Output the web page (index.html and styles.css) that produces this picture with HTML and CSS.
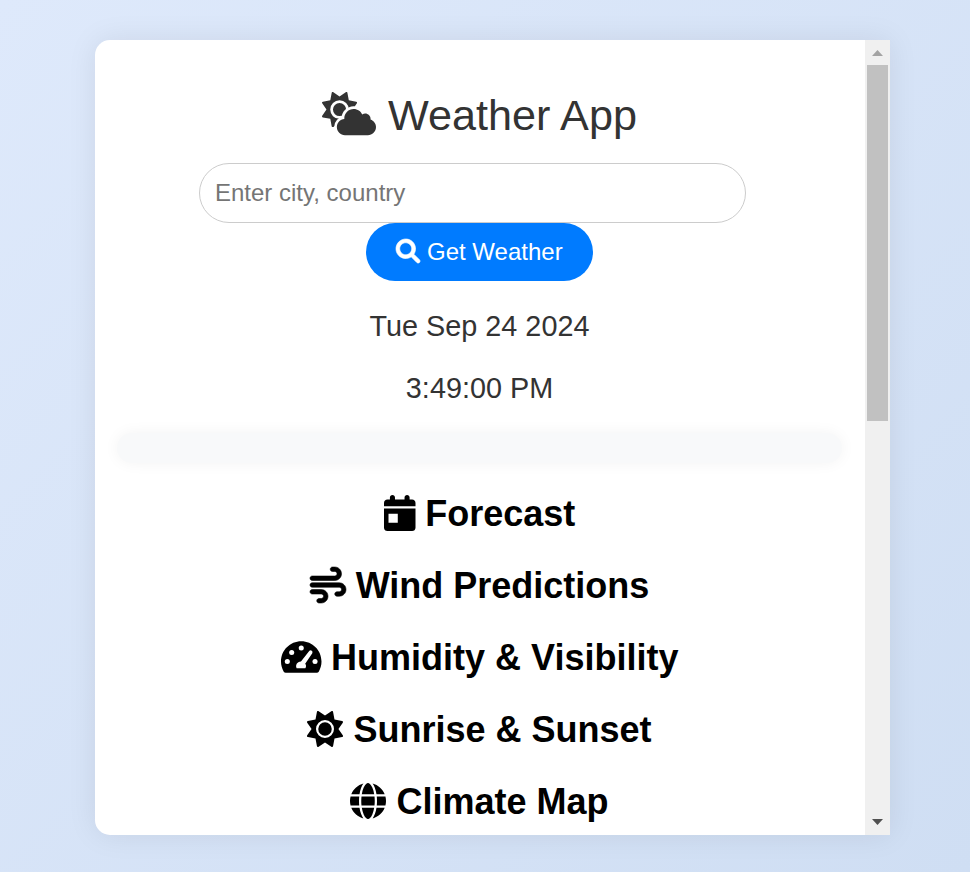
FILE: index.html
```html
<!DOCTYPE html>
<html lang="en">
<head>
<meta charset="utf-8">
<title>Weather App</title>
<link rel="stylesheet" href="styles.css">
</head>
<body>
<div class="card">
  <main class="content">
    <h1 class="title"><svg class="icon wide" viewBox="0 0 640 512"><path transform="scale(.8125)" d="M361.5 1.2c5 2.1 8.6 6.6 9.6 11.9L391 121l107.9 19.8c5.3 1 9.8 4.6 11.9 9.6s1.5 10.7-1.6 15.2L446.9 256l62.3 90.3c3.1 4.5 3.7 10.2 1.6 15.2s-6.6 8.6-11.9 9.6L391 391 371.1 498.9c-1 5.3-4.6 9.8-9.6 11.9s-10.7 1.5-15.2-1.6L256 446.9l-90.3 62.3c-4.5 3.1-10.2 3.7-15.2 1.6s-8.6-6.6-9.6-11.9L121 391 13.1 371.1c-5.3-1-9.8-4.6-11.9-9.6s-1.5-10.7 1.6-15.2L65.1 256 2.8 165.7c-3.1-4.5-3.7-10.2-1.6-15.2s6.6-8.6 11.9-9.6L121 121 140.9 13.1c1-5.3 4.6-9.8 9.6-11.9s10.7-1.5 15.2 1.6L256 65.1 346.3 2.8c4.5-3.1 10.2-3.7 15.2-1.6zM160 256a96 96 0 1 1 192 0 96 96 0 1 1 -192 0zm232 0a136 136 0 1 0 -272 0 136 136 0 1 0 272 0z"/><path class="cloud" d="M575.2 325.7c.2-1.9.8-3.7.8-5.6 0-35.3-28.7-64-64-64-12.6 0-24.2 3.8-34.1 10-17.6-38.8-56.5-66-101.9-66-61.8 0-112 50.1-112 112 0 3 .7 5.8.9 8.7-49.6 3.7-88.9 44.7-88.9 95.3 0 53 43 96 96 96h272c53 0 96-43 96-96 0-42.1-27.2-77.4-64.8-90.4z"/></svg> Weather App</h1>
    <input class="city" type="text" placeholder="Enter city, country">
    <button class="search"><svg class="icon lens" viewBox="0 0 512 512"><path d="M500.3 443.7l-119.7-119.7c27.22-40.41 40.65-90.9 33.46-144.7C401.8 87.79 326.8 13.32 235.2 1.723C99.01-15.51-15.51 99.01 1.724 235.2c11.6 91.64 86.08 166.7 177.6 178.9c53.8 7.189 104.3-6.236 144.7-33.46l119.7 119.7c15.62 15.62 40.95 15.62 56.57 0C515.9 484.7 515.9 459.3 500.3 443.7zM79.1 208c0-70.58 57.42-128 128-128s128 57.42 128 128c0 70.58-57.42 128-128 128S79.1 278.6 79.1 208z"/></svg> Get Weather</button>
    <p class="stamp">Tue Sep 24 2024</p>
    <p class="stamp">3:49:00 PM</p>
    <div class="info"></div>
    <h2 class="section"><svg class="icon narrow" viewBox="0 0 448 512"><path d="M0 464C0 490.5 21.5 512 48 512h352c26.5 0 48-21.5 48-48V192H0V464zM64 266h132v128H64zM400 64h-36V36c0-20-16-36-36-36s-36 16-36 36v28H156V36c0-20-16-36-36-36S84 16 84 36v28H48C21.5 64 0 85.5 0 112V160h448V112C448 85.500 426.500 64 400 64z" fill-rule="evenodd"/></svg> Forecast</h2>
    <h2 class="section"><svg class="icon" viewBox="0 0 512 512"><path class="bold" d="M288 32c0 17.7 14.3 32 32 32h32c17.7 0 32 14.3 32 32s-14.3 32-32 32H32c-17.7 0-32 14.3-32 32s14.3 32 32 32H352c53 0 96-43 96-96s-43-96-96-96H320c-17.7 0-32 14.3-32 32zm64 352c0 17.7 14.3 32 32 32h32c53 0 96-43 96-96s-43-96-96-96H32c-17.7 0-32 14.3-32 32s14.3 32 32 32H416c17.7 0 32 14.3 32 32s-14.3 32-32 32H384c-17.7 0-32 14.3-32 32zM128 512h32c53 0 96-43 96-96s-43-96-96-96H32c-17.7 0-32 14.3-32 32s14.3 32 32 32H160c17.7 0 32 14.3 32 32s-14.3 32-32 32H128c-17.7 0-32 14.3-32 32s14.3 32 32 32z"/></svg> Wind Predictions</h2>
    <h2 class="section"><svg class="icon gauge" viewBox="0 0 576 512"><path d="M288 32C129 32 0 161 0 320c0 52.8 14.25 102.3 39.1 144.8 5.6 9.6 16.3 15.2 27.4 15.2h443c11.1 0 21.800-5.600 27.400-15.200C561.800 422.300 576 372.800 576 320c0-159-129-288-288-288z"/><g class="cut"><circle cx="288" cy="127" r="36"/><circle cx="152" cy="192" r="36"/><circle cx="90" cy="320" r="36"/><circle cx="484" cy="320" r="36"/><path d="M404 168a27 27 0 0 1 41 33L344 352c16 20 15 44 2 64H222c-20-42 4-92 62-96z"/></g></svg> Humidity &amp; Visibility</h2>
    <h2 class="section"><svg class="icon" viewBox="0 0 512 512"><path d="M361.5 1.2c5 2.1 8.6 6.6 9.6 11.9L391 121l107.9 19.8c5.3 1 9.8 4.6 11.9 9.6s1.5 10.7-1.6 15.2L446.9 256l62.3 90.3c3.1 4.5 3.7 10.2 1.6 15.2s-6.6 8.6-11.9 9.6L391 391 371.1 498.9c-1 5.3-4.6 9.8-9.6 11.9s-10.7 1.5-15.2-1.6L256 446.9l-90.3 62.3c-4.5 3.1-10.2 3.7-15.2 1.6s-8.6-6.6-9.6-11.9L121 391 13.1 371.1c-5.3-1-9.8-4.6-11.9-9.6s-1.5-10.7 1.6-15.2L65.1 256 2.8 165.7c-3.1-4.5-3.7-10.2-1.6-15.2s6.6-8.6 11.9-9.6L121 121 140.9 13.1c1-5.3 4.6-9.8 9.6-11.9s10.7-1.5 15.2 1.6L256 65.1 346.3 2.8c4.5-3.1 10.2-3.7 15.2-1.6zM160 256a96 96 0 1 1 192 0 96 96 0 1 1 -192 0zm224 0a128 128 0 1 0 -256 0 128 128 0 1 0 256 0z"/></svg> Sunrise &amp; Sunset</h2>
    <h2 class="section"><svg class="icon" viewBox="0 0 512 512"><path d="M352 256c0 22.2-1.2 43.6-3.3 64H163.3c-2.2-20.4-3.3-41.8-3.3-64s1.2-43.6 3.3-64H348.7c2.2 20.4 3.3 41.8 3.3 64zm28.8-64H503.9c5.3 20.5 8.1 41.9 8.1 64s-2.8 43.5-8.1 64H380.8c2.1-20.6 3.2-42 3.2-64s-1.1-43.4-3.2-64zm112.6-32H376.7c-10-63.9-29.8-117.4-55.3-151.6c78.3 20.7 142 77.5 171.9 151.6zm-149.1 0H167.7c6.1-36.4 15.5-68.6 27-94.7c10.5-23.6 22.2-40.7 33.5-51.5C239.4 3.2 248.7 0 256 0s16.6 3.2 27.8 13.8c11.3 10.8 23 27.9 33.5 51.5c11.6 26 20.9 58.2 27 94.7zm-209 0H18.6C48.6 85.9 112.2 29.1 190.6 8.4C165.1 42.6 145.3 96.1 135.3 160zM8.1 192H131.2c-2.1 20.6-3.2 42-3.2 64s1.1 43.4 3.2 64H8.1C2.8 299.5 0 278.1 0 256s2.8-43.5 8.1-64zM194.7 446.6c-11.6-26-20.9-58.2-27-94.6H344.3c-6.1 36.4-15.5 68.6-27 94.6c-10.5 23.6-22.2 40.7-33.5 51.5C272.6 508.8 263.3 512 256 512s-16.6-3.2-27.8-13.8c-11.3-10.8-23-27.9-33.5-51.5zM135.3 352c10 63.9 29.8 117.4 55.3 151.6C112.2 482.9 48.6 426.1 18.6 352H135.3zm358.1 0c-30 74.1-93.6 130.9-171.9 151.6c25.5-34.2 45.2-87.7 55.3-151.6H493.4z"/></svg> Climate Map</h2>
  </main>
  <div class="scrollbar">
    <span class="arrow up"></span>
    <span class="thumb"></span>
    <span class="arrow down"></span>
  </div>
</div>
</body>
</html>
```
FILE: styles.css
```css
* { box-sizing: border-box; }

body {
  margin: 0;
  height: 872px;
  padding: 40px 80px 37px 95px;
  overflow: hidden;
  background: linear-gradient(135deg, #dee9fb, #cfdef3);
  font-family: "Liberation Sans", Arial, sans-serif;
  color: #333;
}

.card {
  display: flex;
  width: 795px;
  height: 795px;
  background: #fff;
  border-radius: 15px 0 0 15px;
  box-shadow: 0 0 30px rgba(0, 0, 0, 0.08);
}

.content {
  width: 770px;
  height: 795px;
  padding: 50px 23px 0 22px;
  overflow: hidden;
  text-align: center;
}

.icon {
  width: 1em;
  height: 1em;
  overflow: visible;
  vertical-align: -0.125em;
  fill: currentColor;
}
.wide { width: 1.25em; }
.narrow { width: 0.875em; }
.gauge { width: 1.125em; }
.cut { fill: #fff; }
.cloud { stroke: #fff; stroke-width: 64px; paint-order: stroke; }
.lens { stroke: currentColor; stroke-width: 14px; }
.bold { stroke: currentColor; stroke-width: 8px; }

.title {
  margin: 0 0 23px;
  font-size: 43.2px;
  font-weight: 400;
  line-height: 50px;
}

.city {
  display: block;
  width: 547px;
  height: 60px;
  margin: 0 auto 0 82px;
  padding: 0 15px;
  border: 1px solid #ccc;
  border-radius: 30px;
  background: #fff;
  font: 24px "Liberation Sans", Arial, sans-serif;
}
.city::placeholder { color: #757575; }

.search {
  display: block;
  width: 227px;
  height: 58px;
  margin: 0 auto 28px;
  padding: 0;
  border: 0;
  border-radius: 30px;
  background: #007bff;
  color: #fff;
  font: 24px "Liberation Sans", Arial, sans-serif;
  white-space: nowrap;
}

.stamp {
  margin: 0 0 28px;
  font-size: 28.8px;
  line-height: 34px;
}

.info {
  height: 30px;
  margin: 0 0 30px;
  border-radius: 15px;
  background: #f8f9fa;
  box-shadow: 0 0 15px rgba(0, 0, 0, 0.05);
}

.section {
  margin: 0 0 30px;
  color: #000;
  font-size: 36px;
  font-weight: 700;
  line-height: 42px;
}

.scrollbar {
  display: flex;
  flex-direction: column;
  align-items: center;
  width: 25px;
  background: #f0f0f0;
}
.arrow { width: 11px; height: 6px; }
.up {
  margin: 10px 0 9px;
  background: #a3a3a3;
  clip-path: polygon(50% 0, 100% 100%, 0 100%);
}
.thumb { width: 21px; height: 356px; background: #c1c1c1; }
.down {
  margin: auto 0 10px;
  background: #505050;
  clip-path: polygon(0 0, 100% 0, 50% 100%);
}
```
